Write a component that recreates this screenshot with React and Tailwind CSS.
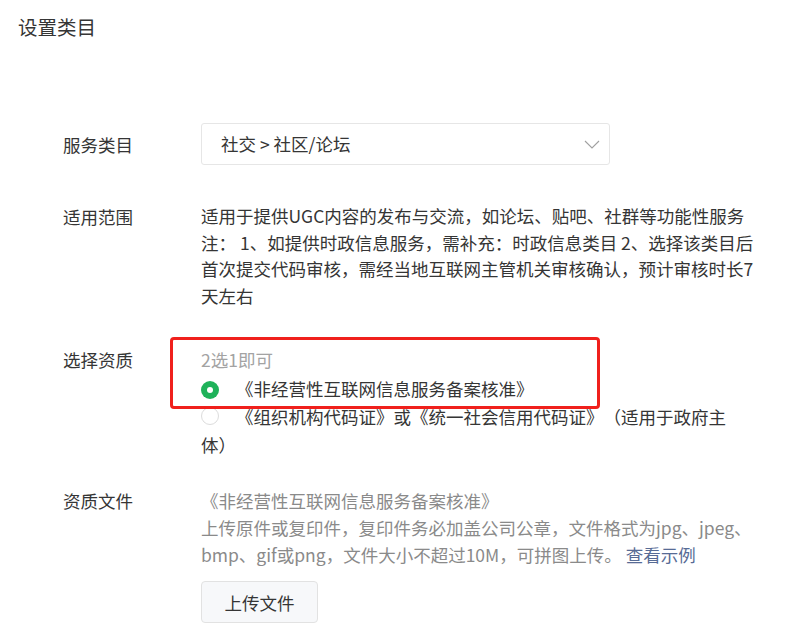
import React from "react";

const font = { fontFamily: '"Noto Sans CJK SC", "Noto Sans", sans-serif' };

function Row({ label, children, className = "", align = "items-start" }) {
  return (
    <div className={`flex ${align} ${className}`}>
      <div className="w-[138px] shrink-0 text-[17.5px] leading-[27px] text-[#353535]">{label}</div>
      <div className="w-[557px]">{children}</div>
    </div>
  );
}

export default function App() {
  return (
    <div className="relative min-h-[641px] w-[797px] bg-white [text-spacing-trim:space-all]" style={font}>
      <div className="pl-[18px] pt-[12px] text-[19.5px] leading-[30px] text-[#353535]">设置类目</div>
      <div className="pl-[63px] pt-[81px]">
        <Row label="服务类目" align="items-center">
          <div className="flex h-[42px] w-[409px] items-center justify-between rounded-[3px] border border-[#e6e6e6] pl-[19px] pr-[9px] text-[17.5px] text-[#353535]">
            <span>社交 &gt; 社区/论坛</span>
            <svg width="16" height="9" viewBox="0 0 16 9" fill="none">
              <path d="M1 1l7 7 7-7" stroke="#a0a0a0" strokeWidth="1.1" />
            </svg>
          </div>
        </Row>

        <Row label="适用范围" className="mt-[38px]">
          <div className="text-[17.5px] leading-[26.6px] text-[#353535]">
            <div>适用于提供UGC内容的发布与交流，如论坛、贴吧、社群等功能性服务</div>
            <div>注： 1、如提供时政信息服务，需补充：时政信息类目 2、选择该类目后首次提交代码审核，需经当地互联网主管机关审核确认，预计审核时长7天左右</div>
          </div>
        </Row>

        <Row label="选择资质" className="mt-[37px]">
          <div className="text-[17.5px] leading-[28px] text-[#353535]">
            <div className="text-[#a3a3a3]">2选1即可</div>
            <div className="leading-[29px]">
              <span className="mr-[17px] inline-flex h-[18px] w-[18px] items-center justify-center rounded-full bg-[#1fb25a] align-[3px]">
                <span className="h-[6px] w-[6px] rounded-full bg-white" />
              </span>
              《非经营性互联网信息服务备案核准》
            </div>
            <div className="leading-[28px]">
              <span className="mr-[17px] inline-block h-[18px] w-[18px] rounded-full border border-[#dcdcdc] bg-white align-[-1px]" />
              《组织机构代码证》或《统一社会信用代码证》（适用于政府主体）
            </div>
          </div>
        </Row>

        <Row label="资质文件" className="mt-[28px]">
          <div className="text-[17.5px] leading-[27px] text-[#8a8a8a]">
            <div>《非经营性互联网信息服务备案核准》</div>
            <div>
              上传原件或复印件，复印件务必加盖公司公章，文件格式为jpg、jpeg、bmp、gif或png，文件大小不超过10M，可拼图上传。 <span className="text-[#576b95]">查看示例</span>
            </div>
            <div className="mt-[13px]">
              <button className="h-[42px] w-[117px] rounded-[4px] border border-[#e2e2e2] bg-[#f7f8fa] text-[17.5px] text-[#353535]">
                上传文件
              </button>
            </div>
          </div>
        </Row>
      </div>
      <div className="pointer-events-none absolute left-[170px] top-[337px] h-[72px] w-[430px] rounded-[4px] border-[3px] border-[#f0201c]" />
    </div>
  );
}
